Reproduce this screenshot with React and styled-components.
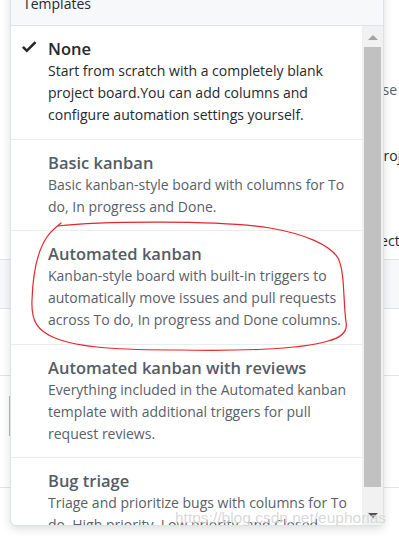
import React from "react";
import styled, { createGlobalStyle } from "styled-components";

const Global = createGlobalStyle`
  html, body { margin: 0; padding: 0; background: #fff; }
  * { box-sizing: border-box; }
`;

const Page = styled.div`
  position: relative;
  width: 399px;
  height: 536px;
  overflow: hidden;
  font-family: "Open Sans", "Noto Sans", sans-serif;
  color: #24292e;
`;

const Backdrop = styled.div`
  display: flex;
  flex-direction: column;
  width: 399px;
`;

const BgText = styled.div`
  margin-top: ${(p) => p.$mt}px;
  height: 20px;
  line-height: 20px;
  font-size: 14px;
  white-space: nowrap;
  overflow: hidden;
  color: ${(p) => p.$color || "#24292e"};
  padding-left: ${(p) => p.$pl || 0}px;
  text-align: ${(p) => (p.$right ? "right" : "left")};
  padding-right: ${(p) => (p.$right ? 2 : 0)}px;
`;

const BgBox = styled.div`
  margin-top: ${(p) => p.$mt}px;
  height: 50px;
  background: #f6f8fa;
  border-top: 1px solid #e1e4e8;
  border-bottom: 1px solid #e1e4e8;
`;

const BgRule = styled.div`
  margin-top: ${(p) => p.$mt}px;
  height: 1px;
  background: #e1e4e8;
`;

const BgEdge = styled.div`
  margin-top: ${(p) => p.$mt}px;
  margin-left: 9px;
  width: 1px;
  height: 40px;
  background: #b3c2b3;
`;

const Panel = styled.div`
  position: absolute;
  left: 10px;
  top: -16px;
  width: 374px;
  height: 542px;
  display: flex;
  flex-direction: column;
  background: #fff;
  border: 1px solid #dfe2e5;
  border-radius: 0 0 6px 6px;
  box-shadow: 0 3px 8px rgba(27, 31, 35, 0.15);
  overflow: hidden;
`;

const Header = styled.div`
  flex-shrink: 0;
  padding: 9px 12px 11px;
  font-size: 14px;
  line-height: 20px;
  color: #24292e;
  background: #f6f8fa;
  border-bottom: 1px solid #e1e4e8;
`;

const Body = styled.div`
  flex: 1;
  min-height: 0;
  display: flex;
`;

const List = styled.div`
  flex: 1;
  min-width: 0;
  overflow: hidden;
`;

const Item = styled.div`
  display: flex;
  padding: 11px 8px 12.5px 11px;
  border-bottom: 1px solid #eaecef;
`;

const CheckSlot = styled.div`
  width: 15px;
  height: 23px;
  margin-right: 11px;
  flex-shrink: 0;
  color: #24292e;
`;

const ItemText = styled.div`
  display: flex;
  flex-direction: column;
  min-width: 0;
`;

const Title = styled.div`
  font-size: 16.5px;
  font-weight: 600;
  line-height: 23px;
  color: ${(p) => (p.$selected ? "#24292e" : "#555c64")};
  white-space: nowrap;
`;

const Desc = styled.div`
  font-size: 14px;
  line-height: 22px;
  color: ${(p) => (p.$selected ? "#24292e" : "#586069")};
  white-space: nowrap;
`;

const Scrollbar = styled.div`
  width: 21px;
  flex-shrink: 0;
  background: #f1f1f1;
  display: flex;
  flex-direction: column;
`;

const ArrowButton = styled.div`
  height: 20px;
  display: flex;
  align-items: center;
  justify-content: center;
  padding-top: ${(p) => (p.$down ? 0 : 2)}px;
`;

const Triangle = styled.div`
  width: 0;
  height: 0;
  border-left: 5px solid transparent;
  border-right: 5px solid transparent;
  ${(p) =>
    p.$down
      ? `border-top: 5px solid ${p.$color};`
      : `border-bottom: 5px solid ${p.$color};`}
`;

const Thumb = styled.div`
  margin: 1px 2px 0 2px;
  height: 440px;
  background: #c1c1c1;
`;

const Track = styled.div`
  flex: 1;
`;

const Watermark = styled.div`
  position: absolute;
  left: 175px;
  top: 508px;
  font-family: "Liberation Sans", Arial, sans-serif;
  font-size: 15.5px;
  line-height: 20px;
  color: rgba(190, 190, 190, 0.6);
  text-shadow: 0 0 1px rgba(255, 255, 255, 0.8);
  white-space: nowrap;
  pointer-events: none;
`;

const Annotation = styled.svg`
  position: absolute;
  left: 0;
  top: 0;
  width: 399px;
  height: 536px;
  pointer-events: none;
`;

const CheckIcon = () => (
  <svg width="14.4" height="19.2" viewBox="0 0 12 16" fill="currentColor" aria-hidden="true">
    <path d="M12 5l-8 8-4-4 1.5-1.5L4 10l6.5-6.5L12 5z" />
  </svg>
);

const templates = [
  {
    title: "None",
    selected: true,
    lines: [
      "Start from scratch with a completely blank",
      "project board.You can add columns and",
      "configure automation settings yourself.",
    ],
  },
  {
    title: "Basic kanban",
    lines: ["Basic kanban-style board with columns for To", "do, In progress and Done."],
  },
  {
    title: "Automated kanban",
    lines: [
      "Kanban-style board with built-in triggers to",
      "automatically move issues and pull requests",
      "across To do, In progress and Done columns.",
    ],
  },
  {
    title: "Automated kanban with reviews",
    lines: [
      "Everything included in the Automated kanban",
      "template with additional triggers for pull",
      "request reviews.",
    ],
  },
  {
    title: "Bug triage",
    lines: [
      "Triage and prioritize bugs with columns for To",
      "do, High priority, Low priority, and Closed.",
    ],
  },
];

export default function App() {
  return (
    <>
      <Global />
      <Page>
        <Backdrop>
          <BgText $mt={80} $right $color="#586069">Choose</BgText>
          <BgText $mt={46} $pl={375}>project</BgText>
          <BgText $mt={65} $pl={361}>Select</BgText>
          <BgBox $mt={8} />
          <BgRule $mt={66} />
          <BgEdge $mt={20} />
          <BgRule $mt={51} />
        </Backdrop>

        <Panel>
          <Header>Templates</Header>
          <Body>
            <List>
              {templates.map((t) => (
                <Item key={t.title}>
                  <CheckSlot>{t.selected && <CheckIcon />}</CheckSlot>
                  <ItemText>
                    <Title $selected={t.selected}>{t.title}</Title>
                    {t.lines.map((l) => (
                      <Desc key={l} $selected={t.selected}>
                        {l}
                      </Desc>
                    ))}
                  </ItemText>
                </Item>
              ))}
            </List>
            <Scrollbar>
              <ArrowButton>
                <Triangle $color="#a3a3a3" />
              </ArrowButton>
              <Thumb />
              <Track />
              <ArrowButton $down>
                <Triangle $down $color="#505050" />
              </ArrowButton>
            </Scrollbar>
          </Body>
        </Panel>

        <Annotation viewBox="0 0 399 536">
          <path
            d="M58 226 C100 221 220 220 270 228 C305 234 330 245 338 258 C345 272 343 300 346 322 C348 332 340 338 328 341 C300 350 230 351 180 350 C120 350 80 348 55 338 C38 331 31 322 32 300 C33 270 38 250 47 237 C51 231 55 228 61 223"
            fill="none"
            stroke="#e3262b"
            strokeWidth="1.2"
            strokeLinecap="round"
          />
        </Annotation>

        <Watermark>https://blog.csdn.net/euphorias</Watermark>
      </Page>
    </>
  );
}
